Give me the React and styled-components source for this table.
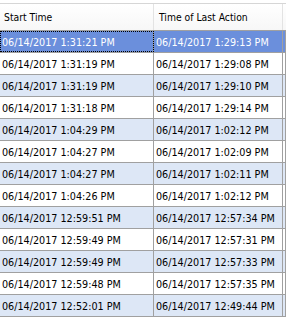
import React from 'react';
import styled, { createGlobalStyle } from 'styled-components';

const rows = [
    ['06/14/2017 1:31:21 PM', '06/14/2017 1:29:13 PM'],
    ['06/14/2017 1:31:19 PM', '06/14/2017 1:29:08 PM'],
    ['06/14/2017 1:31:19 PM', '06/14/2017 1:29:10 PM'],
    ['06/14/2017 1:31:18 PM', '06/14/2017 1:29:14 PM'],
    ['06/14/2017 1:04:29 PM', '06/14/2017 1:02:12 PM'],
    ['06/14/2017 1:04:27 PM', '06/14/2017 1:02:09 PM'],
    ['06/14/2017 1:04:27 PM', '06/14/2017 1:02:11 PM'],
    ['06/14/2017 1:04:26 PM', '06/14/2017 1:02:12 PM'],
    ['06/14/2017 12:59:51 PM', '06/14/2017 12:57:34 PM'],
    ['06/14/2017 12:59:49 PM', '06/14/2017 12:57:31 PM'],
    ['06/14/2017 12:59:49 PM', '06/14/2017 12:57:33 PM'],
    ['06/14/2017 12:59:48 PM', '06/14/2017 12:57:35 PM'],
    ['06/14/2017 12:52:01 PM', '06/14/2017 12:49:44 PM'],
];

const GlobalStyle = createGlobalStyle`
    html, body {
        margin: 0;
        padding: 0;
        background: #ffffff;
        overflow: hidden;
    }
`;

const App = function App() {
    return (
        <>
            <GlobalStyle />
            <Grid>
                <HeaderRow>
                    <HeaderCell>Start Time</HeaderCell>
                    <HeaderCell>Time of Last Action</HeaderCell>
                    <HeaderCell />
                </HeaderRow>
                {rows.map((row, i) => {
                    const selected = i === 0;
                    const tone = selected ? 'selected' : i % 2 === 0 ? 'alt' : 'plain';
                    return (
                        <Row key={i} $tone={tone}>
                            <Cell $focused={selected}>{row[0]}</Cell>
                            <Cell>{row[1]}</Cell>
                            <Cell />
                        </Row>
                    );
                })}
            </Grid>
        </>
    );
};

const Grid = styled.div`
    width: 286px;
    height: 317px;
    overflow: hidden;
    padding-top: 3px;
    font-family: "DejaVu Sans Condensed", "DejaVu Sans", sans-serif;
    font-stretch: condensed;
    font-size: 10.3px;
    color: #000000;
`;

const HeaderRow = styled.div`
    display: grid;
    grid-template-columns: 154px 129px 1fr;
    height: 26px;
    border-top: 1px solid #d6d6d6;
    border-bottom: 1px solid #a0a0a0;
    background: linear-gradient(#ffffff, #f7f7f7);
`;

const HeaderCell = styled.div`
    display: flex;
    align-items: center;
    padding-left: 4px;
    border-right: 1px solid #e3e3e3;
    white-space: nowrap;
    overflow: hidden;
    & + & {
        padding-left: 5px;
    }
`;

const toneColors = {
    selected: '#6b8fdc',
    alt: '#dde7f6',
    plain: '#ffffff',
};

const Row = styled.div`
    display: grid;
    grid-template-columns: 154px 129px 1fr;
    height: 21px;
    border-bottom: 1px solid #a0a0a0;
    background: ${(p) => toneColors[p.$tone]};
    color: ${(p) => (p.$tone === 'selected' ? '#ffffff' : '#000000')};
`;

const Cell = styled.div`
    display: flex;
    align-items: center;
    padding: 1px 0 0 2px;
    font-size: 10.7px;
    border-right: 1px solid #a0a0a0;
    white-space: nowrap;
    overflow: hidden;
    outline: ${(p) => (p.$focused ? '1px dotted #000000' : 'none')};
    outline-offset: -1px;
`;

export default App;
